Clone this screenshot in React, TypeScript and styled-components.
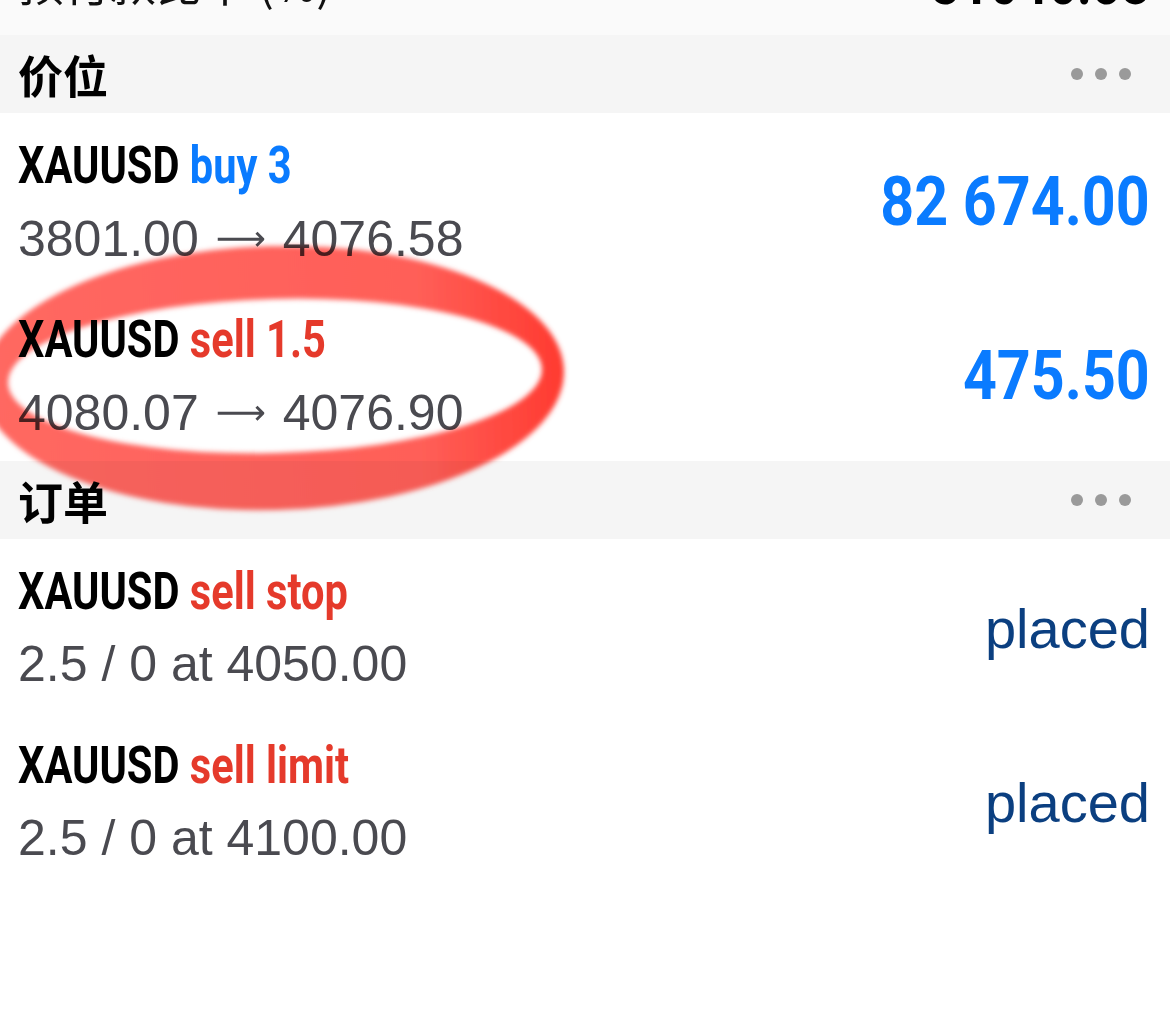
import React from "react";
import styled, { createGlobalStyle } from "styled-components";

const GlobalStyle = createGlobalStyle`
  html, body {
    margin: 0;
    padding: 0;
    background: #ffffff;
  }
  body {
    width: 1170px;
    height: 1016px;
    overflow: hidden;
    font-family: "Liberation Sans", Arial, sans-serif;
  }
`;

const condensed = `Roboto, "Liberation Sans", sans-serif`;
const cjk = `"Noto Sans CJK SC", "Noto Sans", sans-serif`;

const Page = styled.div`
  position: relative;
  width: 1170px;
  height: 1016px;
  overflow: hidden;
  background: #ffffff;
`;

const SummaryRow = styled.div`
  height: 35px;
  overflow: hidden;
  display: flex;
  align-items: flex-end;
  justify-content: space-between;
  padding: 0 20px 0 18px;
  background: #fafafa;
`;

const SummaryLabel = styled.span`
  font-family: ${cjk};
  font-size: 46px;
  line-height: 46px;
  color: #111;
  margin-bottom: 31px;
  white-space: nowrap;
`;

const SummaryValue = styled.span`
  font-family: ${condensed};
  font-weight: 700;
  font-size: 62px;
  line-height: 62px;
  color: #000;
  margin-bottom: 21px;
  white-space: nowrap;
  transform: scaleX(0.82);
  transform-origin: right center;
`;

const SectionHeader = styled.div`
  height: 78px;
  box-sizing: border-box;
  display: flex;
  align-items: center;
  justify-content: space-between;
  padding: 0 39px 0 18px;
  background: #f5f5f5;
`;

const SectionTitle = styled.span`
  font-family: ${cjk};
  font-size: 45px;
  font-weight: 700;
  color: #000;
`;

const Dots = styled.div`
  display: flex;
  gap: 12px;
`;

const Dot = styled.span`
  width: 12px;
  height: 12px;
  border-radius: 50%;
  background: #9a9a9a;
`;

const Row = styled.div`
  height: 174px;
  box-sizing: border-box;
  padding: 23px 20px 19px 18px;
  display: flex;
  align-items: center;
  justify-content: space-between;
  background: #ffffff;
`;

const Info = styled.div`
  display: flex;
  flex-direction: column;
  gap: 12px;
`;

const Title = styled.div`
  font-family: ${condensed};
  font-weight: 700;
  font-size: 52px;
  line-height: 60px;
  color: #000;
  white-space: nowrap;
  transform: scaleX(0.8);
  transform-origin: left center;
`;

const Side = styled.span<{ $tone: "buy" | "sell" }>`
  font-weight: 700;
  color: ${(p) => (p.$tone === "buy" ? "#0a7bff" : "#e53a2b")};
`;

const Prices = styled.div`
  font-family: "Liberation Sans", Arial, sans-serif;
  font-size: 50px;
  line-height: 60px;
  color: #4a4a50;
  white-space: nowrap;
`;

const Arrow = styled.span`
  font-family: "DejaVu Sans", "Liberation Sans", sans-serif;
  font-size: 35px;
  vertical-align: 6px;
  margin: 0 3px;
`;

const Amount = styled.div`
  font-family: ${condensed};
  font-weight: 700;
  font-size: 68px;
  color: #0a7bff;
  white-space: nowrap;
  transform: scaleX(0.87);
  transform-origin: right center;
`;

const Status = styled.div`
  font-family: "Liberation Sans", Arial, sans-serif;
  font-size: 56px;
  color: #0b3f80;
`;

const Annotation = styled.svg`
  position: absolute;
  left: 0;
  top: 0;
  width: 1170px;
  height: 1016px;
  pointer-events: none;
  mix-blend-mode: multiply;
`;

type Position = { side: string; tone: "buy" | "sell"; from: string; to: string; profit: string };
type Order = { side: string; tone: "buy" | "sell"; detail: string; status: string };

const positions: Position[] = [
  { side: "buy 3", tone: "buy", from: "3801.00", to: "4076.58", profit: "82 674.00" },
  { side: "sell 1.5", tone: "sell", from: "4080.07", to: "4076.90", profit: "475.50" },
];

const orders: Order[] = [
  { side: "sell stop", tone: "sell", detail: "2.5 / 0 at 4050.00", status: "placed" },
  { side: "sell limit", tone: "sell", detail: "2.5 / 0 at 4100.00", status: "placed" },
];

const Header: React.FC<{ title: string }> = ({ title }) => (
  <SectionHeader>
    <SectionTitle>{title}</SectionTitle>
    <Dots>
      <Dot />
      <Dot />
      <Dot />
    </Dots>
  </SectionHeader>
);

export default function App() {
  return (
    <Page>
      <GlobalStyle />
      <SummaryRow>
        <SummaryLabel>预付款比率 (%)</SummaryLabel>
        <SummaryValue>31046.58</SummaryValue>
      </SummaryRow>

      <Header title="价位" />
      {positions.map((p, i) => (
        <Row key={i}>
          <Info>
            <Title>
              XAUUSD <Side $tone={p.tone}>{p.side}</Side>
            </Title>
            <Prices>
              {p.from} <Arrow>⟶</Arrow> {p.to}
            </Prices>
          </Info>
          <Amount>{p.profit}</Amount>
        </Row>
      ))}

      <Header title="订单" />
      {orders.map((o, i) => (
        <Row key={i}>
          <Info>
            <Title>
              XAUUSD <Side $tone={o.tone}>{o.side}</Side>
            </Title>
            <Prices>{o.detail}</Prices>
          </Info>
          <Status>{o.status}</Status>
        </Row>
      ))}

      <Annotation viewBox="0 0 1170 1016">
        <defs>
          <linearGradient id="ringFill" x1="0" y1="0" x2="1" y2="0">
            <stop offset="0" stopColor="#ff6862" />
            <stop offset="0.75" stopColor="#ff5f58" />
            <stop offset="1" stopColor="#ff3a30" />
          </linearGradient>
          <filter id="soft" x="-10%" y="-20%" width="120%" height="140%">
            <feGaussianBlur stdDeviation="2.5" />
          </filter>
        </defs>
        <g transform="rotate(-1.5 275 376)">
          <path
            fill="url(#ringFill)"
            fillRule="evenodd"
            filter="url(#soft)"
            d="M -18 378 a 291 132 0 1 0 582 0 a 291 132 0 1 0 -582 0 Z M 8 376 a 267 77 0 1 0 534 0 a 267 77 0 1 0 -534 0 Z"
          />
        </g>
      </Annotation>
    </Page>
  );
}
